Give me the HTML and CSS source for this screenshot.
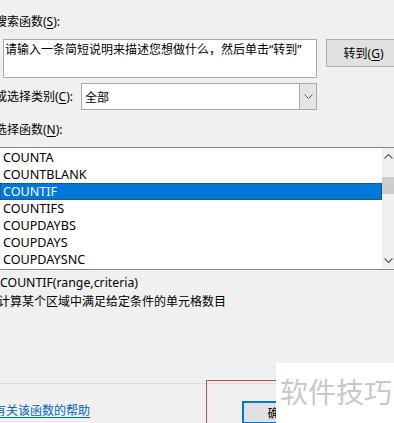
FILE: index.html
```html
<!DOCTYPE html>
<html lang="zh-CN">

<head>
    <meta charset="UTF-8">
    <title>插入函数</title>
    <link rel="stylesheet" href="styles.css">
</head>

<body>
    <div class="dialog">
        <div class="label label-search">搜索函数(<u>S</u>):</div>
        <div class="search-row">
            <div class="search-box">请输入一条简短说明来描述您想做什么，然后单击“转到”</div>
            <div class="btn btn-go">转到(<u>G</u>)</div>
        </div>
        <div class="category-row">
            <span class="label category-label">或选择类别(<u>C</u>):</span>
            <div class="select">
                <span class="select-value">全部</span>
                <span class="select-arrow">
                    <svg width="9" height="5" viewBox="0 0 9 5"><path d="M0.5 0.5 L4.5 4.5 L8.5 0.5" fill="none" stroke="#606060" stroke-width="1"/></svg>
                </span>
            </div>
        </div>
        <div class="label label-list">选择函数(<u>N</u>):</div>
        <div class="listbox">
            <ul class="items">
                <li>COUNTA</li>
                <li>COUNTBLANK</li>
                <li class="selected">COUNTIF</li>
                <li>COUNTIFS</li>
                <li>COUPDAYBS</li>
                <li>COUPDAYS</li>
                <li>COUPDAYSNC</li>
            </ul>
            <div class="scrollbar">
                <div class="scroll-btn">
                    <svg width="9" height="5" viewBox="0 0 9 5"><path d="M0.5 4.5 L4.5 0.5 L8.5 4.5" fill="none" stroke="#606060" stroke-width="1.2"/></svg>
                </div>
                <div class="track"><div class="thumb"></div></div>
                <div class="scroll-btn">
                    <svg width="9" height="5" viewBox="0 0 9 5"><path d="M0.5 0.5 L4.5 4.5 L8.5 0.5" fill="none" stroke="#606060" stroke-width="1.2"/></svg>
                </div>
            </div>
        </div>
        <div class="syntax">COUNTIF(range,criteria)</div>
        <div class="desc">计算某个区域中满足给定条件的单元格数目</div>
        <div class="footer">
            <a class="help-link" href="#">有关该函数的帮助</a>
            <div class="btn btn-ok">确定</div>
            <div class="mark"></div>
        </div>
    </div>
    <div class="watermark">软件技巧</div>
</body>

</html>
```

FILE: styles.css
```css
body {
    font-family: "Noto Sans", "Noto Sans CJK SC", sans-serif;
    font-size: 12px;
    margin: 0;
    padding: 0;
    width: 394px;
    height: 423px;
    overflow: hidden;
    background-color: #f0f0f0;
    color: #000;
    position: relative;
}

u {
    text-decoration-thickness: 1px;
    text-underline-offset: 2px;
}

.dialog {
    margin-left: -5px;
    width: 410px;
}

.label {
    line-height: 16px;
    white-space: nowrap;
}

.label-search {
    margin-top: 14px;
}

.search-row {
    display: flex;
    align-items: flex-start;
    margin-top: 9px;
    margin-left: 8px;
}

.search-box {
    box-sizing: border-box;
    width: 314px;
    height: 39px;
    background-color: #fff;
    border: 1px solid #a9a9a9;
    padding: 2px 1px;
    line-height: 16px;
    white-space: nowrap;
    overflow: hidden;
}

.btn {
    box-sizing: border-box;
    background-color: #e1e1e1;
    border: 1px solid #adadad;
    display: flex;
    align-items: center;
    justify-content: center;
}

.btn-go {
    margin-left: 9px;
    width: 75px;
    height: 28px;
}

.category-row {
    display: flex;
    align-items: center;
    margin-top: 5px;
}

.category-label {
    width: 86px;
    flex: none;
}

.select {
    box-sizing: border-box;
    width: 236px;
    height: 27px;
    background-color: #fff;
    border: 1px solid #a9a9a9;
    display: flex;
    align-items: center;
}

.select-value {
    flex: 1;
    padding-left: 3px;
}

.select-arrow {
    box-sizing: border-box;
    width: 18px;
    height: 27px;
    margin: -1px -1px -1px 0;
    background-color: #e5e5e5;
    border: 1px solid #acacac;
    display: flex;
    align-items: center;
    justify-content: center;
}

.label-list {
    margin-top: 12px;
}

.listbox {
    box-sizing: border-box;
    margin-top: 9px;
    margin-left: 4px;
    width: 401px;
    height: 123px;
    background-color: #fff;
    border: 1px solid #828790;
    padding: 1px 0;
    display: flex;
}

.items {
    list-style: none;
    margin: 0;
    padding: 0;
    flex: 1;
    font-size: 12.6px;
}

.items li {
    height: 17px;
    line-height: 17px;
    padding-left: 3px;
    white-space: nowrap;
}

.items li.selected {
    background-color: #0078d7;
    color: #fff;
    outline: 1px dotted #2a3f55;
    outline-offset: -1px;
}

.scrollbar {
    width: 17px;
    background-color: #f0f0f0;
    display: flex;
    flex-direction: column;
    margin: -1px 0;
}

.scroll-btn {
    height: 17px;
    display: flex;
    align-items: center;
    justify-content: center;
    padding-right: 4px;
}

.track {
    flex: 1;
}

.thumb {
    margin-top: 12px;
    height: 17px;
    background-color: #cdcdcd;
}

.syntax {
    margin-top: 5px;
    margin-left: 5px;
    line-height: 16px;
    font-size: 12.3px;
}

.desc {
    margin-top: 3px;
    margin-left: 3px;
    line-height: 16px;
}

.footer {
    position: relative;
    margin-top: 73px;
    border-top: 1px solid #dadada;
    padding-top: 17px;
    display: grid;
    grid-template-columns: 247px 75px;
    align-items: start;
}

.help-link {
    margin-top: 2px;
    margin-left: -1px;
    line-height: 16px;
    color: #0066cc;
    text-decoration: underline;
    text-underline-offset: 2px;
}

.btn-ok {
    height: 23px;
    border: 2px solid #0078d7;
}

/* red annotation box drawn over the dialog */
.mark {
    position: absolute;
    left: 211px;
    top: -4px;
    width: 220px;
    height: 80px;
    border: 1px solid #c64a4a;
}

.watermark {
    position: absolute;
    left: 276px;
    top: 363px;
    right: 0;
    bottom: 0;
    background-color: #fff;
    color: #c8c8c8;
    font-family: "Noto Sans CJK SC", sans-serif;
    font-size: 28px;
    line-height: 56px;
    padding-left: 4px;
    white-space: nowrap;
}
```
